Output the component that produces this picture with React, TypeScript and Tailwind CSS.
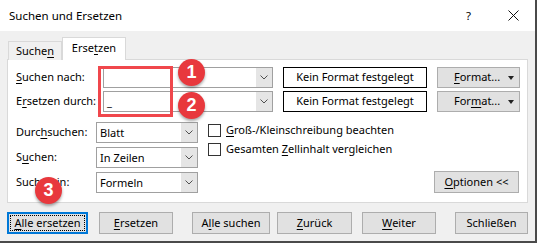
import React from 'react'

const font = "font-['Noto_Sans',sans-serif]"

function Chevron() {
  return (
    <svg width="8" height="5" viewBox="0 0 8 5">
      <polyline points="0.5,0.5 4,4 7.5,0.5" fill="none" stroke="#505050" strokeWidth="1" />
    </svg>
  )
}

function Combo({ width, value }: { width: string; value?: string }) {
  return (
    <div className={`flex h-[21px] ${width} border border-[#a0a0a0] bg-white`}>
      <div className="flex flex-1 items-center pl-[3px] leading-none">{value}</div>
      <div className="flex w-[16px] items-center justify-center bg-[#e5e5e5]">
        <Chevron />
      </div>
    </div>
  )
}

function U({ children }: { children: React.ReactNode }) {
  return <span className="underline underline-offset-[2px]">{children}</span>
}

function Btn({ children, className = '' }: { children: React.ReactNode; className?: string }) {
  return (
    <div className={`flex h-[22px] items-center justify-center border border-[#adadad] bg-[#e1e1e1] ${className}`}>
      {children}
    </div>
  )
}

function FormatBtn({ children }: { children: React.ReactNode }) {
  return (
    <div className="ml-[10px] flex h-[21px] w-[83px] items-center border border-[#adadad] bg-[#e1e1e1]">
      <span className="pl-[16px]">{children}</span>
      <svg className="ml-auto mr-[5px]" width="6" height="4" viewBox="0 0 6 4">
        <polygon points="0,0 6,0 3,4" fill="#222" />
      </svg>
    </div>
  )
}

function Check({ children }: { children: React.ReactNode }) {
  return (
    <div className="flex h-[13px] items-center">
      <div className="h-[13px] w-[13px] border border-[#333] bg-white" />
      <span className="ml-[5px]">{children}</span>
    </div>
  )
}

function Badge({ n, className }: { n: string; className: string }) {
  return (
    <div
      className={`absolute flex h-[27px] w-[27px] items-center justify-center rounded-full bg-[#e8383d] font-['Liberation_Sans',sans-serif] text-[18px] font-bold text-white shadow-[0_2px_3px_rgba(0,0,0,0.35)] ${className}`}
    >
      {n}
    </div>
  )
}

export default function App() {
  return (
    <div className={`relative h-[243px] w-[537px] overflow-hidden border-r-2 border-b-2 border-[#4a4a4a] bg-[#f0f0f0] text-[11px] text-black ${font}`}>
      {/* title bar */}
      <div className="flex h-[31px] items-center bg-white pl-[9px] text-[11.5px]">
        <span>Suchen und Ersetzen</span>
        <span className="ml-auto">?</span>
        <svg className="ml-[37px] mr-[16px]" width="11" height="11" viewBox="0 0 11 11">
          <path d="M0.5 0.5 L10.5 10.5 M10.5 0.5 L0.5 10.5" stroke="#111" strokeWidth="1" />
        </svg>
      </div>

      {/* tabs */}
      <div className="ml-[8px] mt-[6px] flex h-[23px] items-end">
        <div className="flex h-[19px] w-[54px] items-center justify-center border border-b-0 border-[#d9d9d9] bg-[#f0f0f0]">
          <span>
            Suche<U>n</U>
          </span>
        </div>
        <div className="relative z-10 flex h-[23px] w-[64px] items-center justify-center border border-b-0 border-[#d9d9d9] bg-white pb-[2px]">
          <span>
            Erse<U>t</U>zen
          </span>
        </div>
      </div>

      {/* panel */}
      <div className="mx-[7px] -mt-px h-[144px] w-[521px] border border-[#d9d9d9] bg-white pl-[8px] pt-[7px]">
        <div className="flex items-center">
          <span className="w-[87px]">
            <U>S</U>uchen nach:
          </span>
          <Combo width="w-[170px]" />
          <div className="ml-[10px] flex h-[21px] w-[144px] items-center justify-center border border-black bg-white">
            Kein Format festgelegt
          </div>
          <FormatBtn>
            <U>F</U>ormat...
          </FormatBtn>
        </div>
        <div className="mt-[3px] flex items-center">
          <span className="w-[87px]">
            E<U>r</U>setzen durch:
          </span>
          <Combo width="w-[170px]" value="_" />
          <div className="ml-[10px] flex h-[21px] w-[144px] items-center justify-center border border-black bg-white">
            Kein Format festgelegt
          </div>
          <FormatBtn>
            For<U>m</U>at...
          </FormatBtn>
        </div>

        <div className="mt-[10px] flex pr-[8px]">
          <div className="flex flex-col gap-[4px]">
            <div className="flex items-center">
              <span className="w-[80px]">
                Durc<U>h</U>suchen:
              </span>
              <Combo width="w-[102px]" value="Blatt" />
            </div>
            <div className="flex items-center">
              <span className="w-[80px]">
                S<U>u</U>chen:
              </span>
              <Combo width="w-[102px]" value="In Zeilen" />
            </div>
            <div className="flex items-center">
              <span className="w-[80px]">Suchen in:</span>
              <Combo width="w-[102px]" value="Formeln" />
            </div>
          </div>
          <div className="ml-[10px] mt-[2px] flex flex-col gap-[6px]">
            <Check>
              <U>G</U>roß-/Kleinschreibung beachten
            </Check>
            <Check>
              Gesamten <U>Z</U>ellinhalt vergleichen
            </Check>
          </div>
          <Btn className="ml-auto w-[85px] self-end">
            <span>
              <U>O</U>ptionen &lt;&lt;
            </span>
          </Btn>
        </div>
      </div>

      {/* bottom buttons */}
      <div className="mt-[9px] flex">
        <div className="ml-[7px] flex h-[22px] w-[81px] border-2 border-[#0078d7] bg-[#e1e1e1] p-px">
          <div className="flex flex-1 items-center justify-center border border-dotted border-black">
            <span>
              <U>A</U>lle ersetzen
            </span>
          </div>
        </div>
        <Btn className="ml-[11px] w-[74px]">
          <span>
            <U>E</U>rsetzen
          </span>
        </Btn>
        <Btn className="ml-[19px] w-[78px]">
          <span>
            A<U>l</U>le suchen
          </span>
        </Btn>
        <Btn className="ml-[7px] w-[75px]">
          <span>
            <U>Z</U>urück
          </span>
        </Btn>
        <Btn className="ml-[10px] w-[74px]">
          <span>
            <U>W</U>eiter
          </span>
        </Btn>
        <Btn className="ml-[19px] w-[73px]">
          <span>Schließen</span>
        </Btn>
      </div>

      {/* annotations */}
      <div className="absolute left-[98px] top-[66px] h-[51px] w-[75px] border-[3px] border-[#f0474c]" />
      <Badge n="1" className="left-[178px] top-[59px]" />
      <Badge n="2" className="left-[178px] top-[92px]" />
      <Badge n="3" className="left-[35px] top-[177px]" />
    </div>
  )
}
